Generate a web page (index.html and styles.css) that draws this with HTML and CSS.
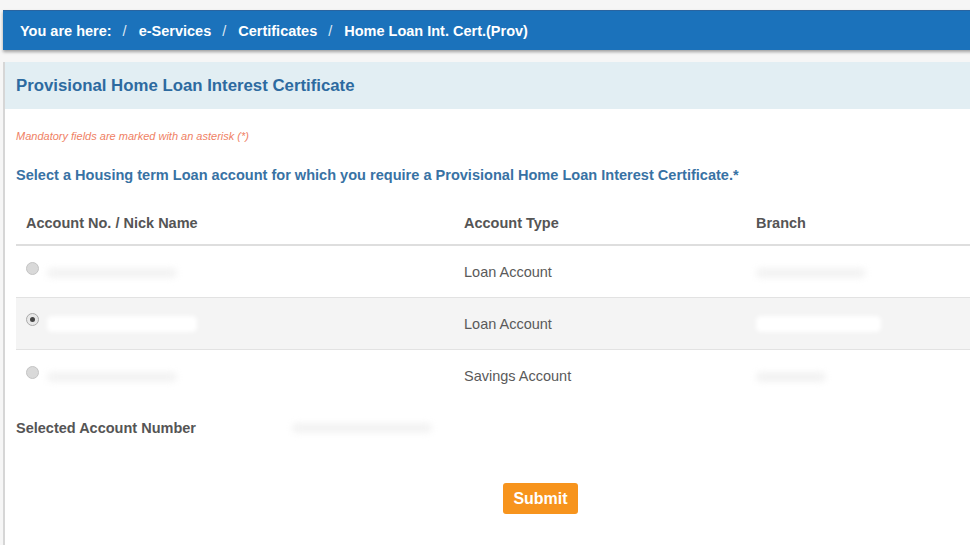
FILE: index.html
```html
<!DOCTYPE html>
<html>
<head>
<meta charset="utf-8">
<link rel="stylesheet" href="styles.css">
</head>
<body>
<div class="page">
  <nav class="crumbs">
    <span>You are here:</span><span class="sep">/</span>
    <span>e-Services</span><span class="sep">/</span>
    <span>Certificates</span><span class="sep">/</span>
    <span>Home Loan Int. Cert.(Prov)</span>
  </nav>
  <section class="panel">
    <header class="panel-head">Provisional Home Loan Interest Certificate</header>
    <div class="panel-body">
      <p class="mandatory">Mandatory fields are marked with an asterisk (*)</p>
      <p class="prompt">Select a Housing term Loan account for which you require a Provisional Home Loan Interest Certificate.*</p>
      <table class="accounts">
        <thead>
          <tr><th class="c1">Account No. / Nick Name</th><th class="c2">Account Type</th><th class="c3">Branch</th></tr>
        </thead>
        <tbody>
          <tr>
            <td><span class="radio"></span><span class="masked m1"></span></td>
            <td>Loan Account</td>
            <td><span class="masked m2"></span></td>
          </tr>
          <tr class="alt">
            <td><span class="radio on"></span><span class="masked white w1"></span></td>
            <td>Loan Account</td>
            <td><span class="masked white w2"></span></td>
          </tr>
          <tr>
            <td><span class="radio"></span><span class="masked m1"></span></td>
            <td>Savings Account</td>
            <td><span class="masked m3"></span></td>
          </tr>
        </tbody>
      </table>
      <div class="selected">
        <span class="sel-label">Selected Account Number</span>
        <span class="masked m4"></span>
      </div>
      <div class="actions">
        <button class="submit">Submit</button>
      </div>
    </div>
  </section>
</div>
</body>
</html>
```

FILE: styles.css
```css
html, body {
  margin: 0;
  padding: 0;
  background: #f6f6f6;
  overflow: hidden;
  font-family: "Liberation Sans", Arial, sans-serif;
}
.page {
  width: 1100px;
  padding: 10px 0 0 3px;
}
.crumbs {
  height: 40px;
  background: #1b72bb;
  border-top: 1px solid #2a64a0;
  box-sizing: border-box;
  box-shadow: 0 2px 3px rgba(0,0,0,0.35);
  display: flex;
  align-items: center;
  padding-left: 17px;
  color: #fff;
  font-weight: bold;
  font-size: 14.5px;
}
.crumbs .sep {
  font-weight: normal;
  padding: 0 12px 0 11px;
  color: #dfe9f3;
}
.panel {
  margin-top: 12px;
  background: #fff;
  border-left: 2px solid #d6d6d6;
  min-height: 500px;
}
.panel-head {
  height: 47px;
  background: #e2eef3;
  display: flex;
  align-items: center;
  padding-left: 11px;
  color: #2d6aa0;
  font-weight: bold;
  font-size: 16.8px;
}
.panel-body {
  padding: 0 0 0 11px;
}
.mandatory {
  margin: 0;
  padding-top: 20px;
  height: 14px;
  line-height: 14px;
  font-size: 11px;
  font-style: italic;
  color: #ef7f64;
}
.prompt {
  margin: 0;
  padding-top: 24px;
  line-height: 16px;
  font-size: 14.55px;
  font-weight: bold;
  color: #3872a4;
}
.accounts {
  margin-top: 18px;
  border-collapse: collapse;
  width: 1000px;
  table-layout: fixed;
  font-size: 14.5px;
  color: #5a5a5a;
}
.accounts th {
  text-align: left;
  font-weight: bold;
  color: #555;
  height: 43px;
  padding: 0 10px;
  border-bottom: 2px solid #dedede;
  vertical-align: middle;
}
.accounts .c1 { width: 418px; }
.accounts .c2 { width: 272px; }
.accounts td {
  height: 51px;
  padding: 0 10px;
  border-bottom: 1px solid #e2e2e2;
  vertical-align: middle;
  white-space: nowrap;
}
.accounts tr.alt td {
  background: #f4f4f4;
}
.accounts tbody tr:last-child td {
  border-bottom: none;
}
.radio {
  display: inline-block;
  width: 11px;
  height: 11px;
  border-radius: 50%;
  background: #d9d9d9;
  border: 1px solid #c4c4c4;
  vertical-align: -1px;
  position: relative;
  top: -3px;
}
.radio.on {
  background: #e8e8e8;
  border-color: #aaa;
}
.radio.on::after {
  content: "";
  position: absolute;
  left: 3px;
  top: 3px;
  width: 5px;
  height: 5px;
  border-radius: 50%;
  background: #444;
}
.masked {
  display: inline-block;
  vertical-align: middle;
  height: 10px;
  border-radius: 5px;
  filter: blur(3px);
}
.m1 { width: 130px; background: #f3f3f3; margin-left: 8px; }
.m2 { width: 110px; background: #f3f3f3; }
.m3 { width: 70px; background: #f2f2f2; }
.m4 { width: 140px; background: #f3f3f3; margin-left: 96px; }
.white { background: #fff; height: 16px; filter: blur(2px); }
.w1 { width: 150px; margin-left: 8px; }
.w2 { width: 125px; }
.selected {
  margin-top: 18px;
  display: flex;
  align-items: center;
  height: 18px;
}
.sel-label {
  font-size: 14.5px;
  font-weight: bold;
  color: #555;
}
.actions {
  padding: 46px 0 0 487px;
}
.submit {
  width: 75px;
  height: 31px;
  border: none;
  border-radius: 3px;
  background: #f7941d;
  color: #fff;
  font-family: "Liberation Sans", Arial, sans-serif;
  font-weight: bold;
  font-size: 16px;
  padding: 0;
}
```
